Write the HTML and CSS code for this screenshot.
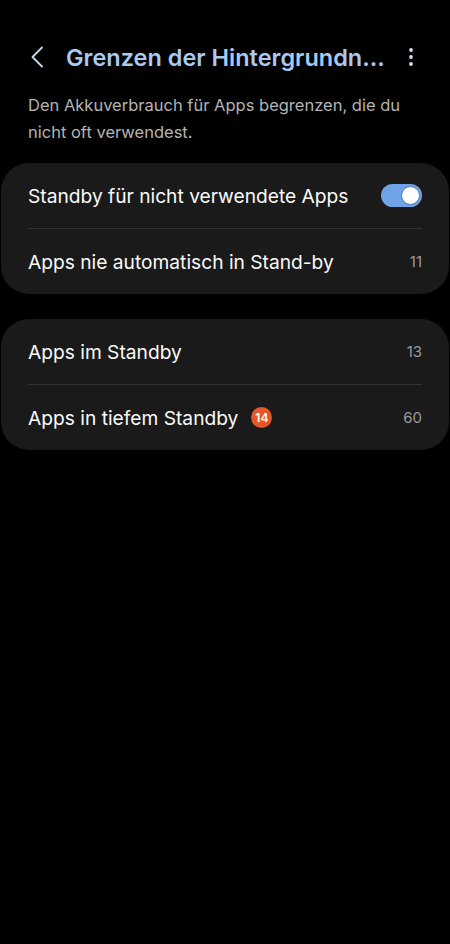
FILE: index.html
```html
<!DOCTYPE html>
<html lang="de">
<head>
<meta charset="UTF-8">
<meta name="viewport" content="width=device-width, initial-scale=1.0">
<title>Grenzen der Hintergrundnutzung</title>
<link rel="stylesheet" href="styles.css">
</head>
<body>

<div class="app-bar">
    <span class="back">
        <svg width="14" height="22" viewBox="0 0 14 22"><path d="M12 1.5 L2.5 11 L12 20.5" fill="none" stroke="#c9d8f0" stroke-width="1.8" stroke-linecap="round" stroke-linejoin="round"/></svg>
    </span>
    <h1 class="title">Grenzen der Hintergrundn...</h1>
    <span class="more">
        <svg width="6" height="20" viewBox="0 0 6 20"><circle cx="3" cy="3" r="1.9" fill="#d8dcf0"/><circle cx="3" cy="10" r="1.9" fill="#d8dcf0"/><circle cx="3" cy="17" r="1.9" fill="#d8dcf0"/></svg>
    </span>
</div>

<p class="intro">Den Akkuverbrauch für Apps begrenzen, die du nicht oft verwendest.</p>

<div class="card">
    <div class="row">
        <span class="label">Standby für nicht verwendete Apps</span>
        <span class="switch on"><span class="knob"></span></span>
    </div>
    <div class="row">
        <span class="label">Apps nie automatisch in Stand-by</span>
        <span class="count">11</span>
    </div>
</div>

<div class="card">
    <div class="row">
        <span class="label">Apps im Standby</span>
        <span class="count">13</span>
    </div>
    <div class="row">
        <span class="label">Apps in tiefem Standby <span class="badge">14</span></span>
        <span class="count">60</span>
    </div>
</div>

</body>
</html>
```

FILE: styles.css
```css
body {
    font-family: Inter, Roboto, "Noto Sans", sans-serif;
    margin: 0;
    padding: 0;
    background-color: #000;
    color: #fafafa;
}
.app-bar {
    display: flex;
    align-items: center;
    height: 44px;
    margin-top: 35px;
    padding: 0 36px 0 30px;
}
.back {
    display: flex;
    width: 36px;
}
.title {
    margin: 0;
    font-size: 23.5px;
    font-weight: 600;
    color: #a9c9f1;
    white-space: nowrap;
}
.more {
    display: flex;
    margin-left: auto;
}
.intro {
    margin: 13px 28px 17px;
    font-size: 16.5px;
    line-height: 27px;
    color: #b4b4b4;
}
.card {
    margin: 0 1px 25px;
    background-color: #1a1a1a;
    border-radius: 28px;
    padding: 0 27px;
}
.row {
    display: flex;
    align-items: center;
    justify-content: space-between;
    height: 65px;
}
.row + .row {
    border-top: 1px solid #333;
}
.label {
    display: flex;
    align-items: center;
    font-size: 19.2px;
}
.count {
    font-size: 15px;
    color: #9a9a9a;
}
.badge {
    display: inline-flex;
    align-items: center;
    justify-content: center;
    width: 21px;
    height: 21px;
    margin-left: 13px;
    border-radius: 50%;
    background-color: #e5572a;
    color: #fff;
    font-size: 12px;
    font-weight: 600;
}
.switch {
    position: relative;
    width: 41px;
    height: 23px;
    border-radius: 12px;
    background-color: #6fa2e6;
}
.switch .knob {
    position: absolute;
    top: 2px;
    right: 2px;
    width: 17px;
    height: 17px;
    border-radius: 50%;
    background-color: #fff;
    border: 1px solid #4f7bb4;
}
```
